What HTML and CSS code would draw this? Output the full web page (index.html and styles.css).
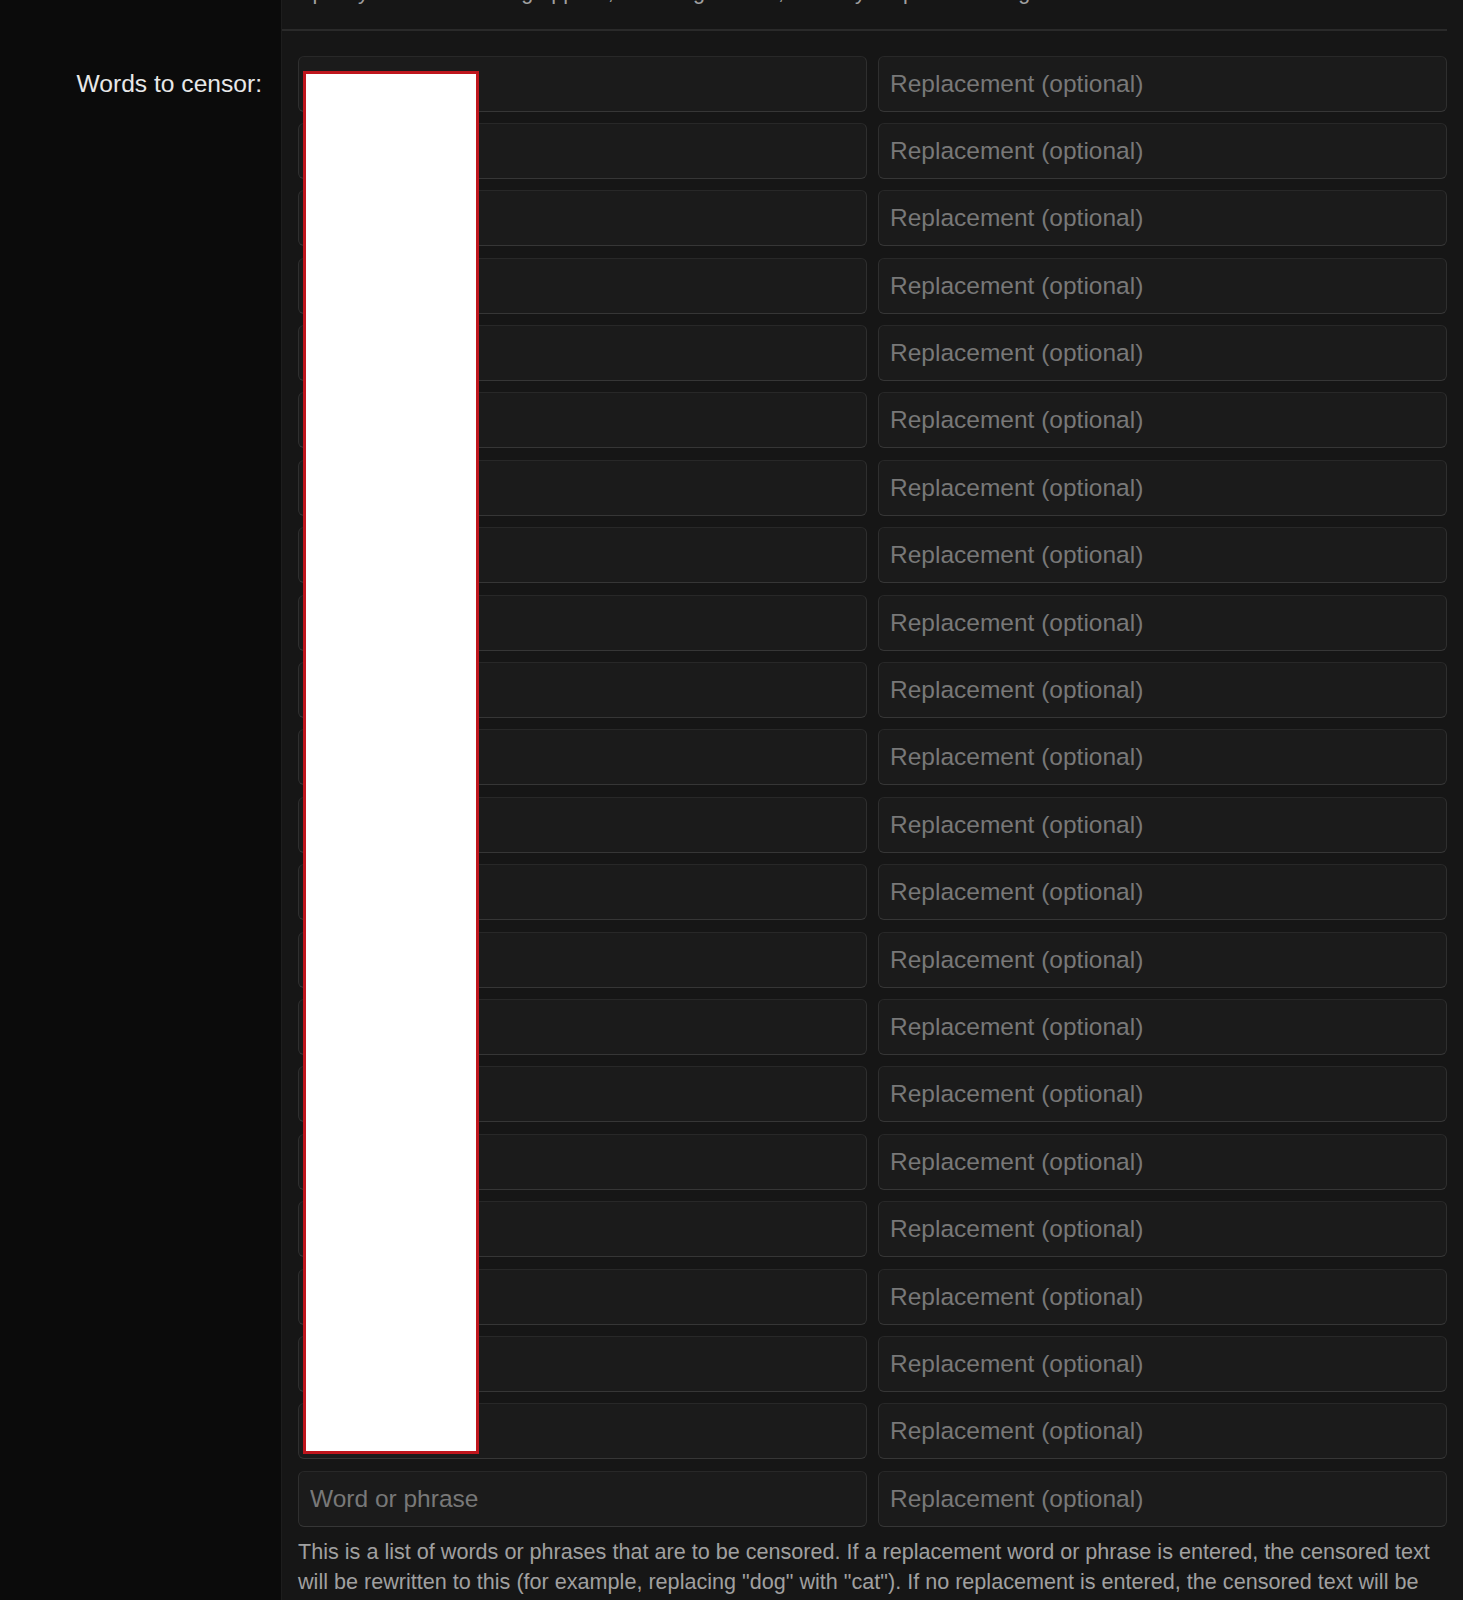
FILE: index.html
```html
<!DOCTYPE html>
<html lang="en">
<head>
<meta charset="utf-8">
<title>Censoring options</title>
<link rel="stylesheet" href="styles.css">
</head>
<body>
<div class="page">
  <div class="row row-prev">
    <div class="label-cell"></div>
    <div class="field-cell">
      <div class="section-end">
        <p class="hint hint-prev">Specify where censoring applies, including in titles, and in your posts and signatures.</p>
      </div>
    </div>
  </div>
  <div class="row row-main">
    <div class="label-cell">
      <label class="field-label" for="w1">Words to censor:</label>
    </div>
    <div class="field-cell">
      <div class="field-body">
        <div class="pairs">
          <div class="pair"><input id="w1" class="text-input" type="text"><input class="text-input" type="text" placeholder="Replacement (optional)"></div>
          <div class="pair"><input class="text-input" type="text"><input class="text-input" type="text" placeholder="Replacement (optional)"></div>
          <div class="pair"><input class="text-input" type="text"><input class="text-input" type="text" placeholder="Replacement (optional)"></div>
          <div class="pair"><input class="text-input" type="text"><input class="text-input" type="text" placeholder="Replacement (optional)"></div>
          <div class="pair"><input class="text-input" type="text"><input class="text-input" type="text" placeholder="Replacement (optional)"></div>
          <div class="pair"><input class="text-input" type="text"><input class="text-input" type="text" placeholder="Replacement (optional)"></div>
          <div class="pair"><input class="text-input" type="text"><input class="text-input" type="text" placeholder="Replacement (optional)"></div>
          <div class="pair"><input class="text-input" type="text"><input class="text-input" type="text" placeholder="Replacement (optional)"></div>
          <div class="pair"><input class="text-input" type="text"><input class="text-input" type="text" placeholder="Replacement (optional)"></div>
          <div class="pair"><input class="text-input" type="text"><input class="text-input" type="text" placeholder="Replacement (optional)"></div>
          <div class="pair"><input class="text-input" type="text"><input class="text-input" type="text" placeholder="Replacement (optional)"></div>
          <div class="pair"><input class="text-input" type="text"><input class="text-input" type="text" placeholder="Replacement (optional)"></div>
          <div class="pair"><input class="text-input" type="text"><input class="text-input" type="text" placeholder="Replacement (optional)"></div>
          <div class="pair"><input class="text-input" type="text"><input class="text-input" type="text" placeholder="Replacement (optional)"></div>
          <div class="pair"><input class="text-input" type="text"><input class="text-input" type="text" placeholder="Replacement (optional)"></div>
          <div class="pair"><input class="text-input" type="text"><input class="text-input" type="text" placeholder="Replacement (optional)"></div>
          <div class="pair"><input class="text-input" type="text"><input class="text-input" type="text" placeholder="Replacement (optional)"></div>
          <div class="pair"><input class="text-input" type="text"><input class="text-input" type="text" placeholder="Replacement (optional)"></div>
          <div class="pair"><input class="text-input" type="text"><input class="text-input" type="text" placeholder="Replacement (optional)"></div>
          <div class="pair"><input class="text-input" type="text"><input class="text-input" type="text" placeholder="Replacement (optional)"></div>
          <div class="pair"><input class="text-input" type="text"><input class="text-input" type="text" placeholder="Replacement (optional)"></div>
          <div class="pair"><input class="text-input" type="text" placeholder="Word or phrase"><input class="text-input" type="text" placeholder="Replacement (optional)"></div>
          <div class="redaction" aria-hidden="true"></div>
        </div>
        <p class="hint">This is a list of words or phrases that are to be censored. If a replacement word or phrase is entered, the censored text will be rewritten to this (for example, replacing "dog" with "cat"). If no replacement is entered, the censored text will be replaced with asterisks.</p>
      </div>
    </div>
  </div>
</div>
</body>
</html>
```

FILE: styles.css
```css
html, body {
  margin: 0;
  padding: 0;
}

body {
  background: #161616;
  font-family: "Liberation Sans", Arial, Helvetica, sans-serif;
  color: #e6e6e6;
}

.page {
  display: grid;
  grid-template-rows: auto 1fr;
  min-height: 100vh;
}

.row {
  display: grid;
  grid-template-columns: 281px 1fr;
}

.label-cell {
  background: #0b0b0b;
  text-align: right;
  padding: 24.5px 19px 0 0;
}

.row-prev .label-cell {
  padding: 0;
}

.field-cell {
  background: #161616;
  border-left: 1px solid #1d1d1d;
  padding-right: 16px;
}

.section-end {
  height: 29px;
  overflow: hidden;
  border-bottom: 2px solid #2a2a2a;
}

.hint {
  margin: 0;
  font-size: 21.6px;
  line-height: 30px;
  color: #a0a0a0;
}

.hint-prev {
  margin-top: -23px;
  padding-left: 16px;
}

.field-label {
  display: block;
  font-size: 24.6px;
  line-height: 56px;
  color: #e8e8e8;
}

.field-body {
  padding: 24.5px 0 0 16px;
}

.pairs {
  position: relative;
  display: flex;
  flex-direction: column;
  gap: 11.4px;
}

.pair {
  display: grid;
  grid-template-columns: 1fr 1fr;
  gap: 11px;
}

.text-input {
  box-sizing: border-box;
  height: 56px;
  width: 100%;
  margin: 0;
  padding: 0 11px;
  background: #1b1b1b;
  border: 1px solid #2f2f2f;
  border-top-color: #282828;
  border-bottom-color: #363636;
  border-radius: 6px;
  font-family: "Liberation Sans", Arial, Helvetica, sans-serif;
  font-size: 24.5px;
  color: #d0d0d0;
  outline: none;
}

.text-input::placeholder {
  color: #787878;
  opacity: 1;
}

.redaction {
  position: absolute;
  left: 4.7px;
  top: 15.5px;
  width: 176px;
  height: 1383px;
  box-sizing: border-box;
  background: #ffffff;
  border: 3px solid #bf161d;
}

.field-body > .hint {
  margin-top: 10px;
}
```
